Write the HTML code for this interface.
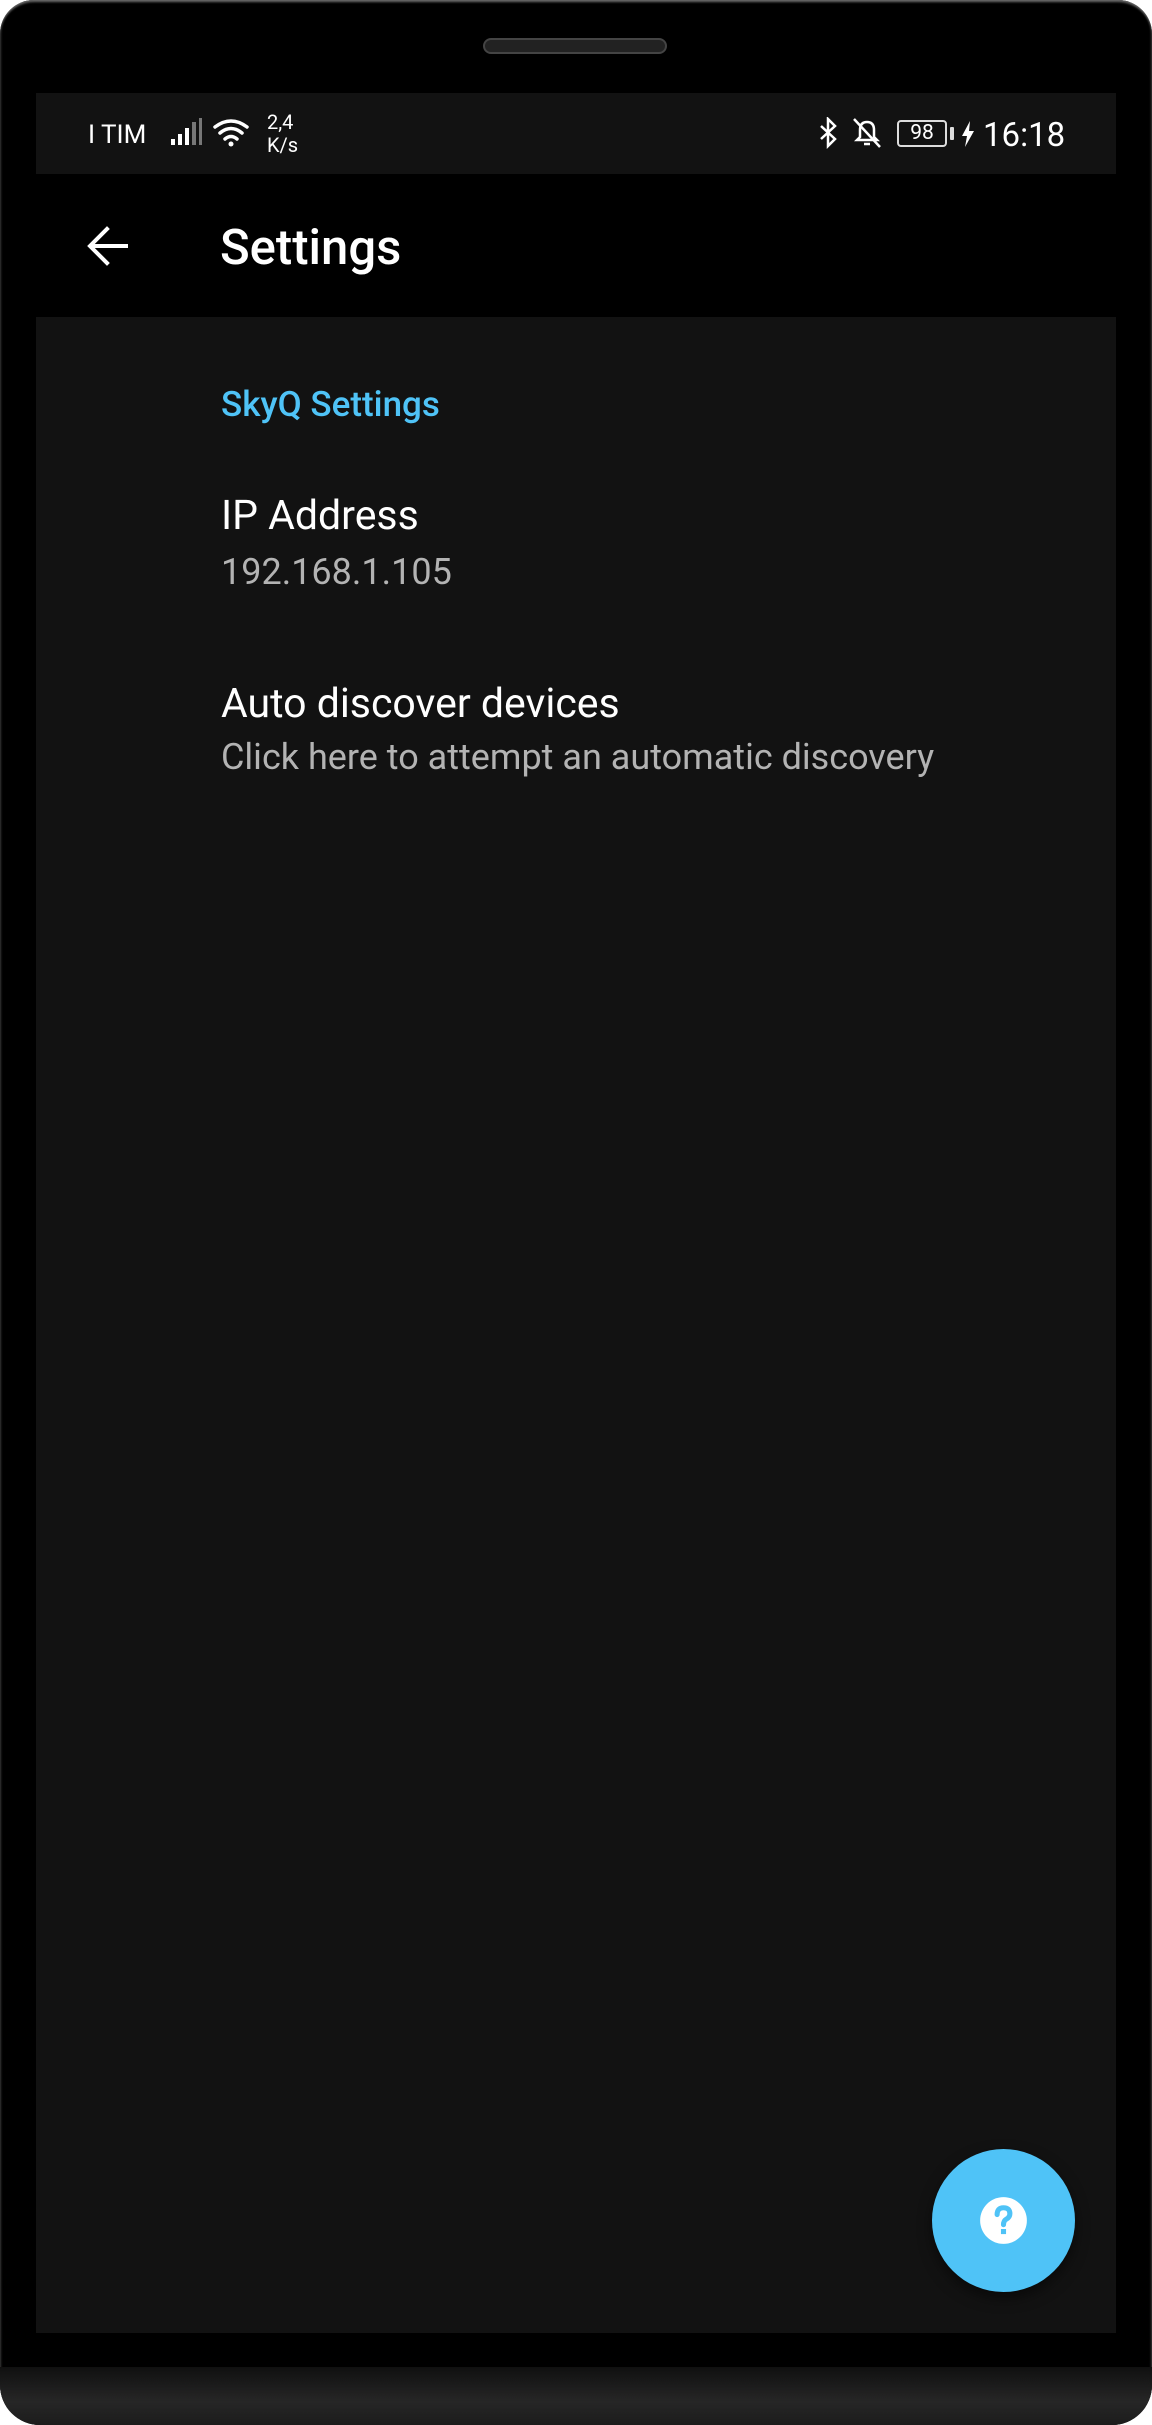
<!DOCTYPE html>
<html><head><meta charset="utf-8"><style>
*{margin:0;padding:0;box-sizing:border-box}
body{width:1152px;height:2425px;background:#fff;position:relative;overflow:hidden;font-family:"Roboto","Liberation Sans",sans-serif}
.phone{position:absolute;left:0;top:0;width:1152px;height:2425px;background:#000;border-radius:34px 34px 40px 40px;box-shadow:inset 0 3px 2px -1px #6a6a6a, inset 2px 0 2px -1px #333, inset -2px 0 2px -1px #333}
.bottom{position:absolute;left:0;top:2367px;width:1152px;height:58px;border-radius:0 0 40px 40px;background:linear-gradient(#101010,#262626 60%,#1c1c1c)}
.speaker{position:absolute;left:483px;top:38px;width:184px;height:16px;border-radius:8px;background:#222;border:2px solid #444}
.screen{position:absolute;left:36px;top:93px;width:1080px;height:2240px;background:#000}
.sb{position:absolute;left:0;top:0;width:1080px;height:81px;background:#121212;color:#fff}
.content{position:absolute;left:0;top:224px;width:1080px;height:2016px;background:#121212}
.t{position:absolute;white-space:nowrap;line-height:1}
</style></head><body>
<div class="phone"></div>
<div class="bottom"></div>
<div class="speaker"></div>
<div class="screen">
 <div class="sb">
  <div class="t" style="left:52px;top:29px;font-size:26px">I TIM</div>
  <svg style="position:absolute;left:134px;top:25px" width="36" height="28">
   <rect x="1" y="21" width="4" height="6" fill="#fff"/><rect x="8" y="16" width="4" height="11" fill="#fff"/><rect x="15" y="10" width="4" height="17" fill="#fff"/><rect x="22" y="4" width="4" height="23" fill="#777"/><rect x="29" y="0" width="3" height="27" fill="#777"/>
  </svg>
  <svg style="position:absolute;left:176px;top:25px" width="40" height="30" fill="none" stroke="#fff" stroke-width="3.5" stroke-linecap="round">
   <path d="M3 9 Q19 -3 35 9"/><path d="M8 15 Q19 6 30 15"/><path d="M13 21 Q19 16 25 21"/><circle cx="19" cy="26" r="2.5" fill="#fff" stroke="none"/>
  </svg>
  <div class="t" style="left:231px;top:19px;font-size:20px">2,4</div>
  <div class="t" style="left:231px;top:42px;font-size:20px">K/s</div>
  <svg style="position:absolute;left:782px;top:24px" width="22" height="32" fill="none" stroke="#fff" stroke-width="2.5">
   <path d="M3 9 L17 22 L10 29 L10 2 L17 9 L3 22"/>
  </svg>
  <svg style="position:absolute;left:816px;top:24px" width="30" height="32" fill="none" stroke="#fff" stroke-width="2.5">
   <path d="M5 23 L8 20 L8 13 Q8 5 15 5 Q22 5 22 13 L22 20 L25 23 Z"/><path d="M12 27 L18 27"/><path d="M2 2 L28 30"/>
  </svg>
  <div style="position:absolute;left:861px;top:27px;width:50px;height:27px;border:2px solid #ddd;border-radius:4px;color:#fff;font-size:21px;text-align:center;line-height:23px">98</div>
  <div style="position:absolute;left:914px;top:34px;width:4px;height:13px;background:#ddd;border-radius:1px"></div>
  <svg style="position:absolute;left:925px;top:28px" width="14" height="26"><path d="M9 0 L1 15 L6 15 L4 26 L13 10 L8 10 Z" fill="#fff"/></svg>
  <div class="t" style="left:947px;top:26px;font-size:33px">16:18</div>
 </div>
 <svg style="position:absolute;left:51px;top:133px" width="42" height="40" fill="none" stroke="#fff" stroke-width="4" stroke-linecap="square">
  <path d="M4 20 L39 20"/><path d="M20 3 L3 20 L20 37"/>
 </svg>
 <div class="t" style="left:184px;top:130px;font-size:49px;font-weight:500;color:#fff">Settings</div>
 <div class="content">
  <div class="t" style="left:185px;top:70px;font-size:35px;font-weight:500;color:#4fc3f7">SkyQ Settings</div>
  <div class="t" style="left:185px;top:179px;font-size:41px;color:#fff">IP Address</div>
  <div class="t" style="left:185px;top:237px;font-size:36px;color:#b3b3b3">192.168.1.105</div>
  <div class="t" style="left:185px;top:367px;font-size:41px;color:#fff">Auto discover devices</div>
  <div class="t" style="left:185px;top:422px;font-size:36px;color:#b3b3b3">Click here to attempt an automatic discovery</div>
  <div style="position:absolute;left:896px;top:1832px;width:143px;height:143px;border-radius:50%;background:#4fc3f7;box-shadow:0 6px 14px rgba(0,0,0,.5)">
   <svg style="position:absolute;left:46px;top:46px" width="51" height="51" viewBox="0 0 24 24">
    <circle cx="12" cy="12" r="11" fill="#fff"/>
    <path d="M9 9.2 Q9 6 12 6 Q15 6 15 8.8 Q15 10.4 13.3 11.4 Q12 12.2 12 14" fill="none" stroke="#4fc3f7" stroke-width="2.4" stroke-linecap="round"/>
    <rect x="10.8" y="16" width="2.4" height="2.4" fill="#4fc3f7"/>
   </svg>
  </div>
 </div>
</div>
</body></html>
